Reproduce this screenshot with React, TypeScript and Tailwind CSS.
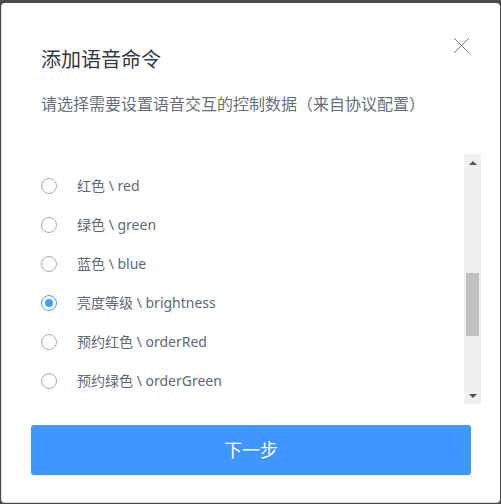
const items = [
  { id: 'red', cn: '红色', en: 'red' },
  { id: 'green', cn: '绿色', en: 'green' },
  { id: 'blue', cn: '蓝色', en: 'blue' },
  { id: 'brightness', cn: '亮度等级', en: 'brightness' },
  { id: 'orderRed', cn: '预约红色', en: 'orderRed' },
  { id: 'orderGreen', cn: '预约绿色', en: 'orderGreen' },
]

const font = { fontFamily: '"Noto Sans", "Noto Sans CJK SC", sans-serif' }

function Radio({ checked }: { checked: boolean }) {
  return (
    <span
      className={
        checked
          ? 'flex h-[16px] w-[16px] items-center justify-center rounded-full border border-[#409eff] bg-white'
          : 'flex h-[16px] w-[16px] items-center justify-center rounded-full border border-[#a8abb2] bg-white'
      }
    >
      {checked && <span className="h-[8px] w-[8px] rounded-full bg-[#409eff]" />}
    </span>
  )
}

export default function App() {
  const selected = 'brightness'

  return (
    <div className="h-[504px] w-[501px] bg-[#4a4a4a] pt-[3px] pl-[1px]" style={font}>
      <div className="relative h-[500px] w-[499px] rounded-[4px] border-l border-b border-[#dcdcdc] bg-white">
        <button className="absolute right-[30px] top-[34px] h-[17px] w-[17px] text-[#6e7c8c]">
          <svg viewBox="0 0 17 17" width="17" height="17" fill="none" stroke="currentColor" strokeWidth="1">
            <path d="M1 1 L16 16 M16 1 L1 16" />
          </svg>
        </button>

        <div className="px-[39px] pt-[43px]">
          <h2 className="text-[20px] leading-[28px] text-[#333a44]">添加语音命令</h2>
          <p className="mt-[18px] text-[16px] leading-[24px] text-[#66707c]">
            请选择需要设置语音交互的控制数据（来自协议配置）
          </p>
        </div>

        <div className="mt-[38px] ml-[39px] mr-[19px] flex h-[250px]">
          <ul className="flex-1 pt-[12px]">
            {items.map((it) => (
              <li key={it.id} className="flex h-[39px] items-center">
                <Radio checked={it.id === selected} />
                <span className="ml-[20px] text-[14px] text-[#5d6978]">
                  {it.cn} \ {it.en}
                </span>
              </li>
            ))}
          </ul>
          <div className="flex w-[17px] flex-col items-center bg-[#f0f0f0]">
            <div className="flex h-[17px] items-center justify-center">
              <span className="h-0 w-0 border-x-[4px] border-b-[4px] border-x-transparent border-b-[#505050]" />
            </div>
            <div className="mt-[102px] h-[63px] w-[13px] bg-[#c1c1c1]" />
            <div className="flex-1" />
            <div className="flex h-[17px] items-center justify-center">
              <span className="h-0 w-0 border-x-[4px] border-t-[4px] border-x-transparent border-t-[#505050]" />
            </div>
          </div>
        </div>

        <div className="mt-[21px] px-[29px]">
          <button className="flex h-[50px] w-[440px] items-center justify-center rounded-[3px] bg-[#3d97ff] text-[18px] text-white">
            下一步
          </button>
        </div>
      </div>
    </div>
  )
}
